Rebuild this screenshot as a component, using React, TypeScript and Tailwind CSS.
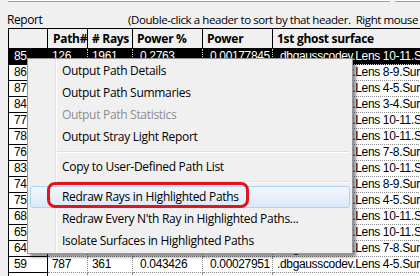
import React from "react";

type Row = { n: string; a?: string; b?: string; c?: string; d?: string; e?: string; sel?: boolean };

const rows: Row[] = [
  { n: "85", a: "126", b: "1961", c: "0.2763", d: "0.00177845", e: ".dbgausscodev.Lens 10-11.Surface", sel: true },
  { n: "86", e: ".dbgausscodev.Lens 8-9.Surface" },
  { n: "87", e: ".dbgausscodev.Lens 4-5.Surface" },
  { n: "84", e: ".dbgausscodev.Lens 3-4.Surface" },
  { n: "77", e: ".dbgausscodev.Lens 10-11.Surface" },
  { n: "78", e: ".dbgausscodev.Lens 10-11.Surface" },
  { n: "76", e: ".dbgausscodev.Lens 7-8.Surface" },
  { n: "83", e: ".dbgausscodev.Lens 10-11.Surface" },
  { n: "74", e: ".dbgausscodev.Lens 8-9.Surface" },
  { n: "75", e: ".dbgausscodev.Lens 4-5.Surface" },
  { n: "68", e: ".dbgausscodev.Lens 10-11.Surface" },
  { n: "65", e: ".dbgausscodev.Lens 10-11.Surface" },
  { n: "64", e: ".dbgausscodev.Lens 7-8.Surface" },
  { n: "59", a: "787", b: "361", c: "0.043426", d: "0.00027951", e: ".dbgausscodev.Lens 4-5.Surface" },
  { n: "" },
];

const ui = { fontFamily: '"Open Sans", "Noto Sans", sans-serif' };
const grid = { fontFamily: '"Liberation Sans", Arial, sans-serif' };

function MenuItem({ label, disabled, hot }: { label: string; disabled?: boolean; hot?: boolean }) {
  return (
    <div
      className={
        "relative h-[22px] flex items-center pl-[31px] pr-2 whitespace-nowrap tracking-[-0.3px] " +
        (hot
          ? "border border-[#b3d2f2] rounded-[3px] bg-gradient-to-b from-[#f1f7fe] to-[#dce9f9]"
          : "border border-transparent") +
        (disabled ? " text-[#8d8d8d]" : " text-black")
      }
    >
      {label}
    </div>
  );
}

function Sep() {
  return (
    <div className="h-[8px] flex flex-col justify-center pl-[27px] pr-[1px]">
      <div className="h-[1px] bg-[#e0e0e0]" />
      <div className="h-[1px] bg-white" />
    </div>
  );
}

export default function App() {
  return (
    <div className="relative w-[420px] h-[276px] overflow-hidden bg-[#f0f0f0] text-black" style={ui}>
      {/* top strip */}
      <div className="flex h-[3px]">
        <div className="ml-[8px] w-[382px] h-[2px] bg-white border-b border-[#a0a0a0]" />
        <div className="ml-[5px] flex-1 h-[2px] bg-white border-b border-[#a0a0a0]" />
      </div>
      {/* caption line */}
      <div className="flex h-[25px] pt-[9px] text-[12px] leading-[16px] whitespace-nowrap">
        <span className="ml-[7px] w-[121px] shrink-0 tracking-[-0.4px]">Report</span>
        <span className="text-[11.5px] tracking-[-0.42px]">
          (Double-click a header to sort by that header.&nbsp; Right mouse click for options)
        </span>
      </div>
      {/* table */}
      <div className="ml-[8px] w-max border-t border-l border-black bg-white">
        <div className="flex h-[20px] border-b border-black bg-[#f0f0f0] text-[12px] font-bold leading-[19px] whitespace-nowrap tracking-[-0.3px]">
          <div className="w-[39px] shrink-0 border-r border-black" />
          <div className="w-[40px] shrink-0 border-r border-black pl-[5px]">Path#</div>
          <div className="w-[45px] shrink-0 border-r border-black pl-[4px]">#&nbsp;Rays</div>
          <div className="w-[70px] shrink-0 border-r border-black pl-[4px]">Power %</div>
          <div className="w-[70px] shrink-0 border-r border-black pl-[4px]">Power</div>
          <div className="w-[200px] shrink-0 pl-[4px]">1st ghost surface</div>
        </div>
        {rows.map((r, i) => {
          const dot = r.sel ? "border-[#d0d0d0]" : "border-[#8a8a8a]";
          const cell = "shrink-0 border-r border-b border-dotted overflow-hidden " + dot;
          return (
            <div
              key={i}
              className={
                "flex h-[16px] text-[12px] leading-[15px] tracking-[-0.35px] whitespace-nowrap " +
                (r.sel ? "bg-black text-white" : "bg-white text-black")
              }
              style={grid}
            >
              <div className={"w-[39px] shrink-0 border-r border-b border-black pl-[5px] " + (r.sel ? "bg-black" : "bg-white")}>
                {r.n}
              </div>
              <div className={cell + " w-[40px] pl-[4px]"}>{r.a}</div>
              <div className={cell + " w-[45px] pl-[4px]"}>{r.b}</div>
              <div className={cell + " w-[70px] pl-[7px]"}>{r.c}</div>
              <div className={cell + " w-[70px] pl-[7px]"}>{r.d}</div>
              <div className={cell + " w-[200px] pl-[4px]"}>{r.e}</div>
            </div>
          );
        })}
      </div>

      {/* context menu */}
      <div
        className="absolute left-[27px] top-[58px] w-[326px] bg-[#f0f0f0] border border-[#979797] px-[2px] py-[1px] text-[12px] shadow-[3px_3px_3px_rgba(0,0,0,0.45)]"
        style={ui}
      >
        <div className="absolute left-[27px] top-0 bottom-0 w-[2px] border-l border-[#e2e3e3] bg-white" />
        <MenuItem label="Output Path Details" />
        <MenuItem label="Output Path Summaries" />
        <MenuItem label="Output Path Statistics" disabled />
        <MenuItem label="Output Stray Light Report" />
        <Sep />
        <MenuItem label="Copy to User-Defined Path List" />
        <Sep />
        <MenuItem label="Redraw Rays in Highlighted Paths" hot />
        <MenuItem label="Redraw Every N'th Ray in Highlighted Paths..." />
        <MenuItem label="Isolate Surfaces in Highlighted Paths" />
      </div>

      {/* red annotation */}
      <div className="absolute left-[47px] top-[182px] w-[202px] h-[26px] border-[3px] border-[#e3141e] rounded-[8px]" />
    </div>
  );
}
